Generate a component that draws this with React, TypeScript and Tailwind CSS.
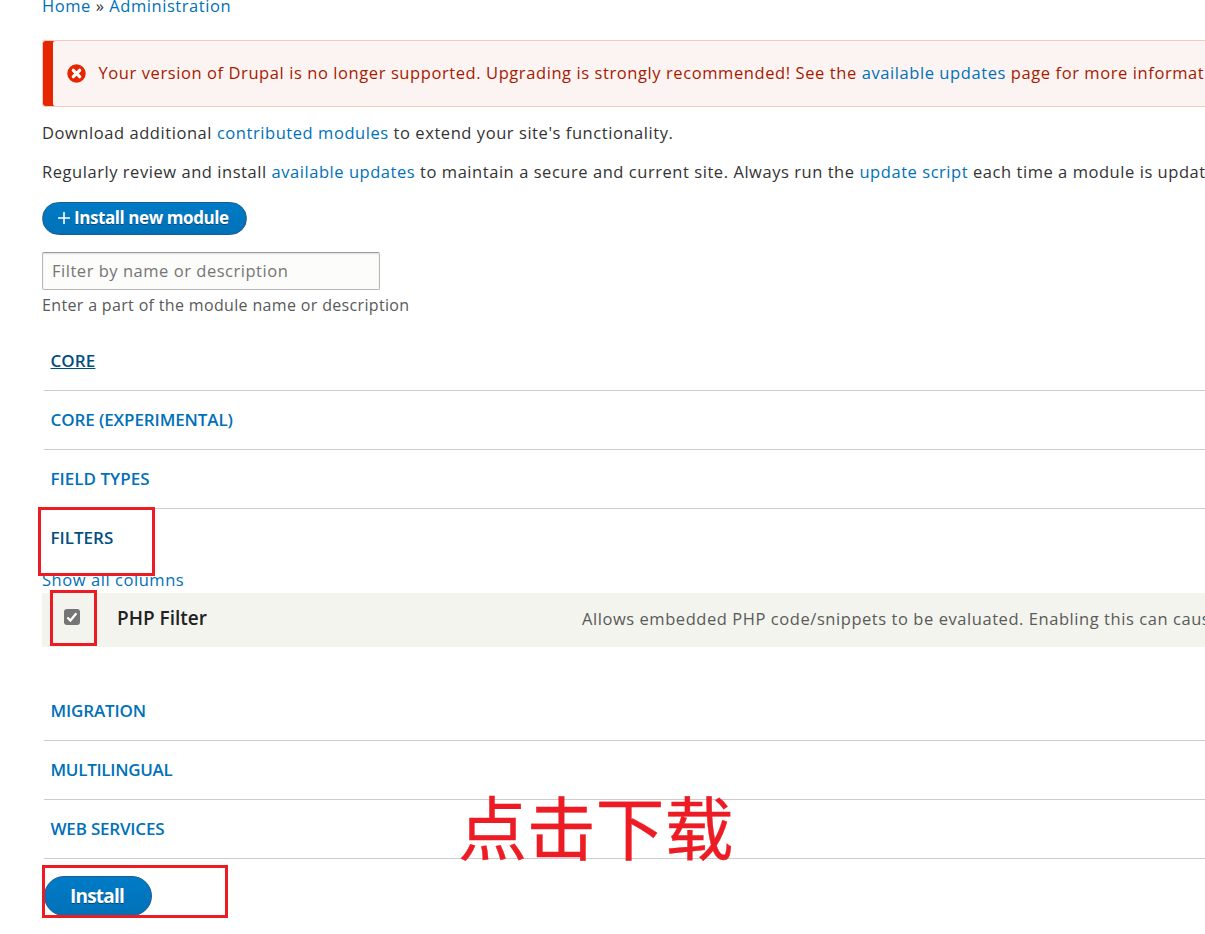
import React, { useState } from "react";

interface ModuleGroupProps {
  title: string;
  active?: boolean;
  underlined?: boolean;
  bordered?: boolean;
  tracking: string;
}

function ModuleGroup({ title, active, underlined, bordered = true, tracking }: ModuleGroupProps) {
  return (
    <div
      className={`ml-0.5 flex h-[59px] items-center border-b pl-[6.5px] ${
        bordered ? "border-[#ccc]" : "border-transparent"
      }`}
    >
      <a
        href="#"
        className={`text-[17px] font-semibold leading-6 ${tracking} ${active ? "text-[#004f80]" : "text-[#0071b8]"} ${
          underlined ? "underline decoration-1 underline-offset-1" : ""
        }`}
      >
        {title}
      </a>
    </div>
  );
}

function Link({ children }: { children: React.ReactNode }) {
  return (
    <a href="#" className="text-[#0071b8]">
      {children}
    </a>
  );
}

export default function App() {
  const [filter, setFilter] = useState("");
  const [enabled, setEnabled] = useState(true);

  return (
    <div className="relative h-[934px] w-full overflow-hidden whitespace-nowrap bg-white pl-[42px] font-['Open_Sans','Noto_Sans',sans-serif] text-[16.5px] tracking-[0.56px] text-[#333]">
      {/* Breadcrumb */}
      <nav className="-mt-1.5 h-6 leading-6">
        <Link>Home</Link> » <Link>Administration</Link>
      </nav>

      {/* Error message */}
      <div className="mt-[22px] flex h-[67px] items-center rounded-l-[3px] border-y border-l border-[#f9c9bf] bg-[#fcf4f2] text-[#a51b00] shadow-[inset_10px_0_0_#e62600]">
        <svg className="ml-6 h-[19px] w-[19px] shrink-0" viewBox="0 0 19 19">
          <circle cx="9.5" cy="9.5" r="9.2" fill="#e62600" />
          <path d="M6.3 6.3l6.4 6.4M12.7 6.3l-6.4 6.4" stroke="#fff" strokeWidth="3.2" strokeLinecap="round" />
        </svg>
        <p className="mb-0.5 ml-[12.5px] leading-6 tracking-[0.585px]">
          Your version of Drupal is no longer supported. Upgrading is strongly recommended! See the{" "}
          <Link>available updates</Link> page for more information.
        </p>
      </div>

      <p className="mt-3.5 h-6 leading-6">
        Download additional <Link>contributed modules</Link> to extend your site's functionality.
      </p>
      <p className="mt-[15px] h-6 leading-6 tracking-[0.55px]">
        Regularly review and install <Link>available updates</Link> to maintain a secure and current site. Always run
        the <Link>update script</Link> each time a module is updated.
      </p>

      <button className="mt-[18px] flex h-[33px] w-[205px] items-center rounded-full border border-[#1e5c90] bg-gradient-to-b from-[#007bc6] to-[#0071b8] pb-px pl-[15px] font-bold text-white">
        <svg className="mr-1 h-3 w-3 shrink-0" viewBox="0 0 12 12">
          <path d="M6 0v12M0 6h12" stroke="#fff" strokeWidth="1.6" />
        </svg>
        <span className="text-[17px] leading-6 tracking-[-0.42px] [text-shadow:0_1px_rgba(0,0,0,0.4)]">
          Install new module
        </span>
      </button>

      <input
        type="text"
        value={filter}
        onChange={(e) => setFilter(e.target.value)}
        placeholder="Filter by name or description"
        className="mt-[17px] block h-[38px] w-[338px] rounded-[2px] border border-[#b8b8b8] border-t-[#999] bg-[#fcfcfa] px-[9px] pb-0.5 tracking-[0.53px] shadow-[inset_0_1px_2px_rgba(0,0,0,0.125)] outline-none placeholder:text-[#757575]"
      />
      <div className="mt-[3px] h-6 text-[16px] leading-6 tracking-[0.34px] text-[#595959]">
        Enter a part of the module name or description
      </div>

      {/* Module groups */}
      <div className="mt-[15px]">
        <ModuleGroup title="CORE" active underlined tracking="tracking-[0.1px]" />
        <ModuleGroup title="CORE (EXPERIMENTAL)" tracking="tracking-[-0.1px]" />
        <ModuleGroup title="FIELD TYPES" tracking="tracking-[0.02px]" />
        <ModuleGroup title="FILTERS" active bordered={false} tracking="tracking-[0px]" />
        <div className="h-[25px] leading-6">
          <Link>Show all columns</Link>
        </div>
        <div className="flex h-[54px] items-center bg-[#f3f4ee]">
          <button
            role="checkbox"
            aria-checked={enabled}
            onClick={() => setEnabled(!enabled)}
            className="mb-1.5 ml-[22px] flex h-4 w-4 shrink-0 items-center justify-center rounded-[3px] bg-[#757575]"
          >
            {enabled && (
              <svg className="h-4 w-4" viewBox="0 0 16 16">
                <path d="M3.4 8.5l3 3 6-7.3" fill="none" stroke="#fff" strokeWidth="2.2" />
              </svg>
            )}
          </button>
          <label className="mb-1 ml-[37px] w-[465px] shrink-0 text-[19px] font-semibold tracking-[0px] text-[#222]">
            PHP Filter
          </label>
          <span className="mb-0.5 text-[#5a5a5a]">
            Allows embedded PHP code/snippets to be evaluated. Enabling this can cause security and performance issues.
          </span>
        </div>
      </div>

      <div className="mt-[35px]">
        <ModuleGroup title="MIGRATION" tracking="tracking-[-0.15px]" />
        <ModuleGroup title="MULTILINGUAL" tracking="tracking-[-0.3px]" />
        <ModuleGroup title="WEB SERVICES" tracking="tracking-[-0.2px]" />
      </div>

      <button className="ml-0.5 mt-[17px] h-10 w-[108px] rounded-full border border-[#1e5c90] bg-gradient-to-b from-[#007bc6] to-[#0071b8] pr-0.5 text-[19px] font-bold leading-none tracking-[-0.8px] text-white [text-shadow:0_1px_rgba(0,0,0,0.4)]">
        Install
      </button>

      {/* Highlight marks laid over the form */}
      <div className="pointer-events-none absolute left-[38px] top-[507px] h-[69px] w-[117px] border-3 border-[#ed1c24]" />
      <div className="pointer-events-none absolute left-[50px] top-[590px] h-14 w-[47px] border-3 border-[#ed1c24]" />
      <div className="pointer-events-none absolute left-[42px] top-[865px] h-[53px] w-[186px] border-3 border-[#ed1c24]" />
      <div className="pointer-events-none absolute left-[458px] top-[776px] font-['Noto_Sans_CJK_SC',sans-serif] text-[69px] leading-[98px] tracking-[-0.2px] text-[#ed1c24] [-webkit-text-stroke:0.4px_#ed1c24]">
        点击下载
      </div>
    </div>
  );
}
